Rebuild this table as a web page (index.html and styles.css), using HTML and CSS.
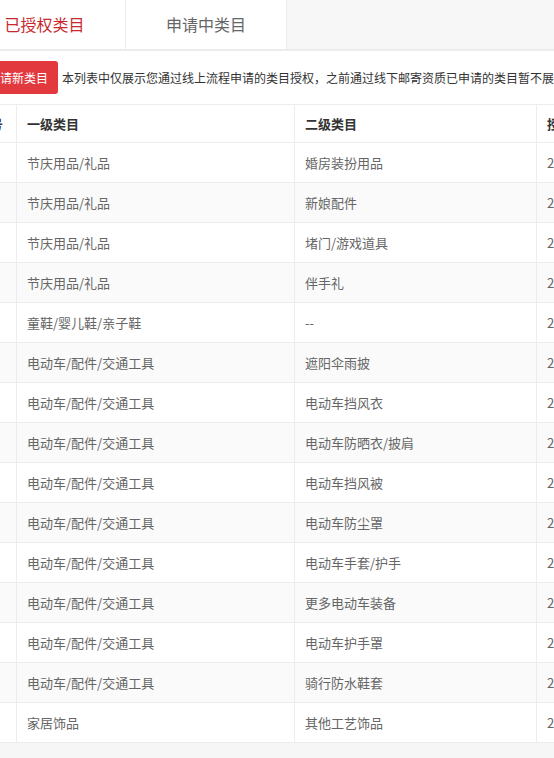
FILE: index.html
```html
<!DOCTYPE html>
<html lang="zh-CN">
<head>
<meta charset="utf-8">
<title>类目管理</title>
<link rel="stylesheet" href="styles.css">
</head>
<body>
<div class="page">
  <div class="tabs">
    <div class="tab tab-active">已授权类目</div>
    <div class="tab">申请中类目</div>
  </div>
  <div class="content">
    <div class="toolbar">
      <button class="btn-apply">申请新类目</button>
      <span class="tip">本列表中仅展示您通过线上流程申请的类目授权，之前通过线下邮寄资质已申请的类目暂不展示，如有疑问请联系客服</span>
    </div>
    <table class="grid">
      <colgroup>
        <col class="c-no"><col class="c-first"><col class="c-second"><col class="c-time">
      </colgroup>
      <thead>
        <tr><th>序号</th><th>一级类目</th><th>二级类目</th><th>授权时间</th></tr>
      </thead>
      <tbody>
        <tr><td>1</td><td>节庆用品/礼品</td><td>婚房装扮用品</td><td>2019-06-12 10:21:33</td></tr>
        <tr><td>2</td><td>节庆用品/礼品</td><td>新娘配件</td><td>2019-06-12 10:21:33</td></tr>
        <tr><td>3</td><td>节庆用品/礼品</td><td>堵门/游戏道具</td><td>2019-06-12 10:21:33</td></tr>
        <tr><td>4</td><td>节庆用品/礼品</td><td>伴手礼</td><td>2019-06-12 10:21:33</td></tr>
        <tr><td>5</td><td>童鞋/婴儿鞋/亲子鞋</td><td>--</td><td>2019-06-12 10:21:33</td></tr>
        <tr><td>6</td><td>电动车/配件/交通工具</td><td>遮阳伞雨披</td><td>2019-06-12 10:21:33</td></tr>
        <tr><td>7</td><td>电动车/配件/交通工具</td><td>电动车挡风衣</td><td>2019-06-12 10:21:33</td></tr>
        <tr><td>8</td><td>电动车/配件/交通工具</td><td>电动车防晒衣/披肩</td><td>2019-06-12 10:21:33</td></tr>
        <tr><td>9</td><td>电动车/配件/交通工具</td><td>电动车挡风被</td><td>2019-06-12 10:21:33</td></tr>
        <tr><td>10</td><td>电动车/配件/交通工具</td><td>电动车防尘罩</td><td>2019-06-12 10:21:33</td></tr>
        <tr><td>11</td><td>电动车/配件/交通工具</td><td>电动车手套/护手</td><td>2019-06-12 10:21:33</td></tr>
        <tr><td>12</td><td>电动车/配件/交通工具</td><td>更多电动车装备</td><td>2019-06-12 10:21:33</td></tr>
        <tr><td>13</td><td>电动车/配件/交通工具</td><td>电动车护手罩</td><td>2019-06-12 10:21:33</td></tr>
        <tr><td>14</td><td>电动车/配件/交通工具</td><td>骑行防水鞋套</td><td>2019-06-12 10:21:33</td></tr>
        <tr><td>15</td><td>家居饰品</td><td>其他工艺饰品</td><td>2019-06-12 10:21:33</td></tr>
      </tbody>
    </table>
  </div>
</div>
</body>
</html>
```

FILE: styles.css
```css
html, body {
  margin: 0;
  padding: 0;
  background: #f6f6f6;
  overflow: hidden;
  font-family: "Noto Sans CJK SC", "Liberation Sans", sans-serif;
}

.page {
  width: 800px;
  margin-left: -36px;
}

.tabs {
  display: flex;
  height: 49px;
  background: #f7f7f7;
  border-bottom: 2px solid #ececec;
}

.tab {
  width: 161px;
  display: flex;
  align-items: center;
  justify-content: center;
  font-size: 16px;
  color: #666;
  background: #fff;
  border-right: 1px solid #ececec;
  padding-bottom: 1px;
  box-sizing: border-box;
}

.tab-active {
  width: 162px;
  color: #c8282e;
}

.content {
  background: #fff;
  padding-top: 10px;
}

.toolbar {
  display: flex;
  align-items: center;
  gap: 4px;
  height: 33px;
  padding-left: 14px;
  margin-bottom: 10px;
  white-space: nowrap;
}

.btn-apply {
  height: 33px;
  padding: 0 10px;
  border: none;
  border-radius: 3px;
  background: #e2393e;
  color: #fff;
  font-family: inherit;
  font-size: 12px;
}

.tip {
  font-size: 12px;
  color: #333;
}

.grid {
  margin-left: 2px;
  border-collapse: collapse;
  table-layout: fixed;
  width: 780px;
  font-size: 13px;
}

.c-no { width: 50px; }
.c-first { width: 278px; }
.c-second { width: 242px; }
.c-time { width: 210px; }

.grid th,
.grid td {
  border: 1px solid #ececec;
  padding: 0 10px;
  text-align: left;
  white-space: nowrap;
  overflow: hidden;
}

.grid th {
  height: 37px;
  color: #333;
  font-weight: bold;
  background: #fff;
}

.grid td {
  height: 39px;
  color: #666;
}

.grid tbody tr:nth-child(even) td {
  background: #fafafa;
}
```
